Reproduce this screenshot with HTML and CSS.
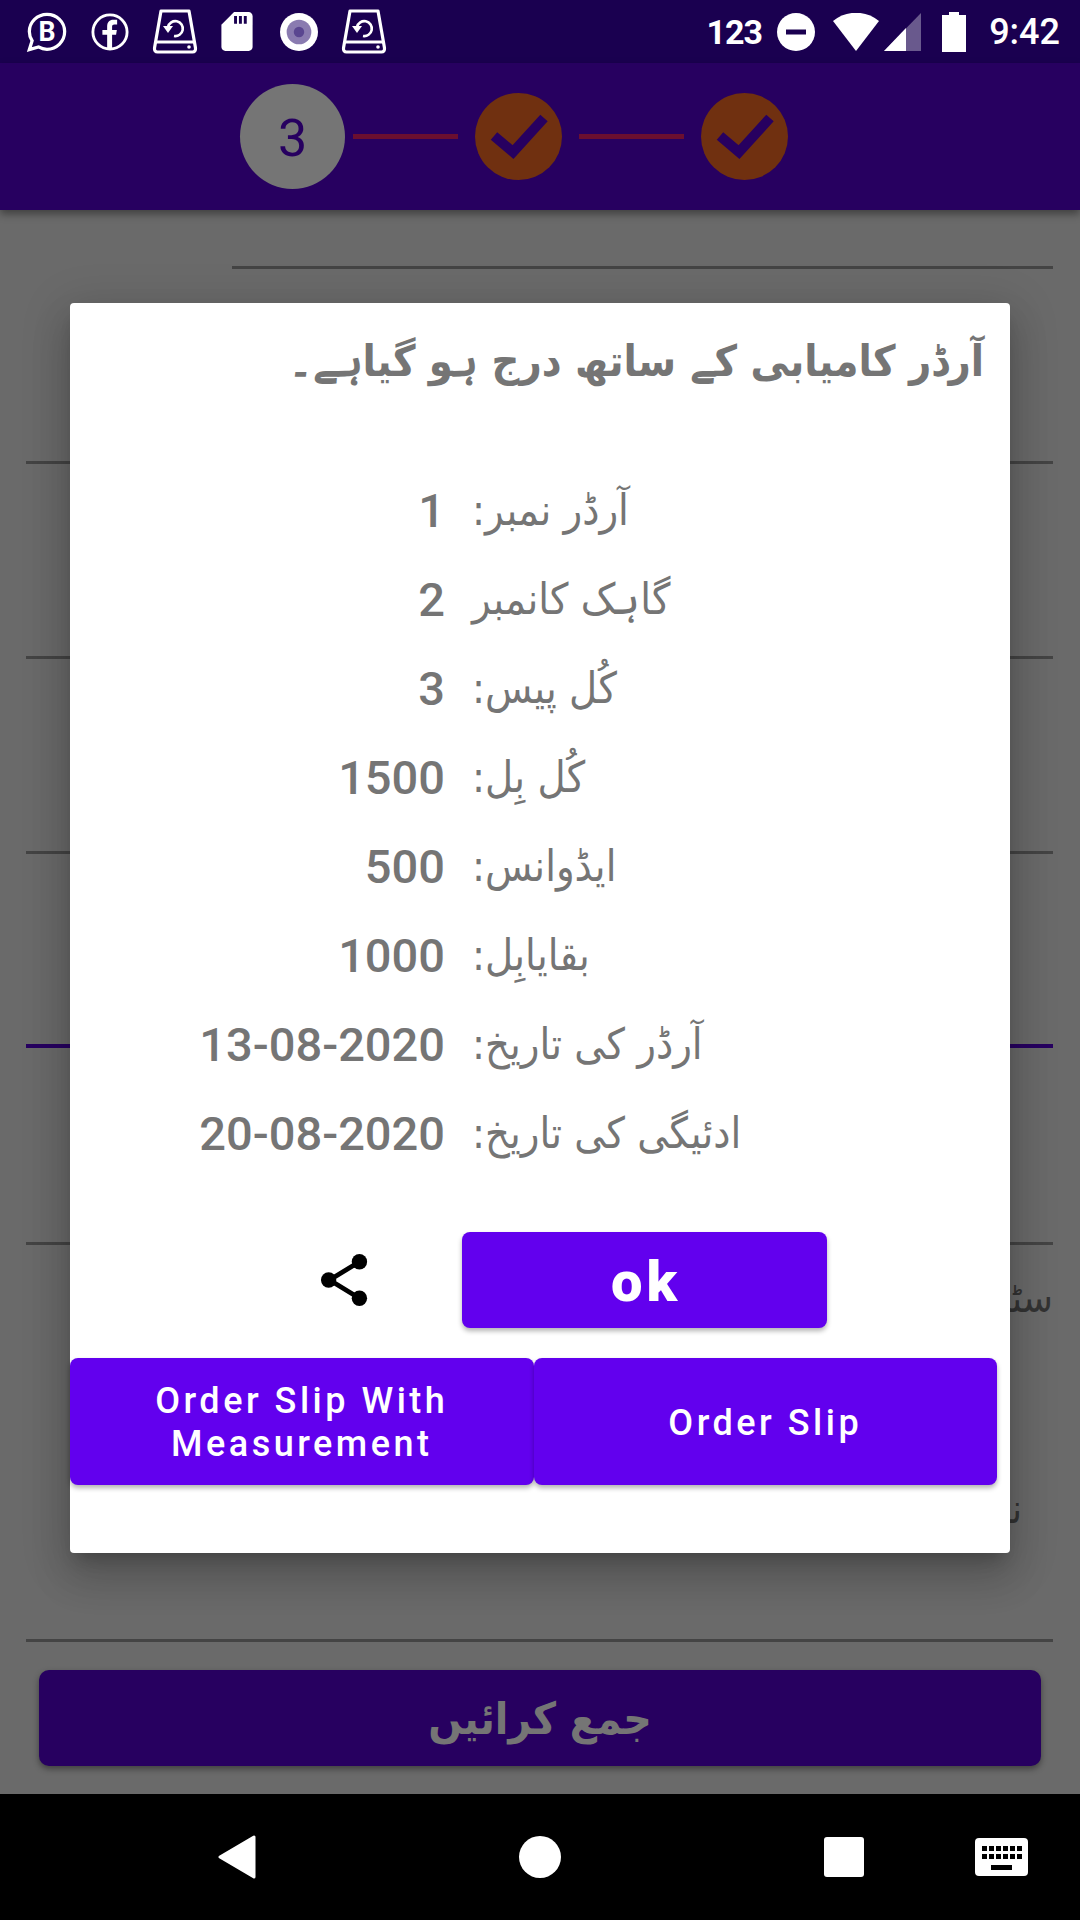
FILE: index.html
```html
<!DOCTYPE html>
<html lang="en">
<head>
  <meta charset="UTF-8" />
  <title>Order</title>
  <link rel="stylesheet" href="styles.css">
</head>
<body>

  <!-- Status bar -->
  <div class="status-bar">
    <div class="status-left">
      <svg width="42" height="44" viewBox="0 0 44 44"><path d="M22 3.500C11.800 3.500 3.500 11.600 3.500 21.600c0 3.600 1 6.800 2.900 9.600L3.500 40.500l9.600-2.900c2.700 1.600 5.700 2.500 8.900 2.500 10.200 0 18.500-8.300 18.500-18.500S32.200 3.500 22 3.500z" fill="none" stroke="#fff" stroke-width="3.400"/><text x="22" y="31" class="st-b">B</text></svg>
      <svg width="38" height="38" viewBox="0 0 40 40"><circle cx="20" cy="20" r="18" fill="none" stroke="#fff" stroke-width="3"/><path d="M17 38V23h-5v-5h5v-4c0-4.500 2.500-7 6.500-7h4v5h-3c-1.500 0-2.300.8-2.300 2.300V18h5l-.8 5h-4.200v15z" fill="#fff"/></svg>
      <svg width="46" height="46" viewBox="0 0 46 46"><use href="#backup-drive"/></svg>
      <svg width="32" height="39" viewBox="0 0 32 40"><path d="M13 0h15c2 0 4 2 4 4v32c0 2-2 4-4 4H4c-2 0-4-2-4-4V13z" fill="#fff"/><path d="M13 4h3v8h-3zM18 4h3v8h-3zM23 4h3v8h-3z" fill="#1a0050"/></svg>
      <svg class="st-dot" width="38" height="38" viewBox="0 0 40 40"><circle cx="20" cy="20" r="20" fill="#fff"/><circle cx="20" cy="20" r="13" fill="#8a7bb0"/><circle cx="20" cy="20" r="5.500" fill="#5a4690"/></svg>
      <svg width="46" height="46" viewBox="0 0 46 46"><use href="#backup-drive"/></svg>
    </div>
    <div class="status-right">
      <span class="st-123">123</span>
      <svg width="38" height="38" viewBox="0 0 38 38"><circle cx="19" cy="19" r="19" fill="#fff"/><rect x="9" y="16.500" width="20" height="5" fill="#1a0050"/></svg>
      <svg class="st-wifi" width="46" height="38" viewBox="0 0 46 38"><path d="M0 8C13-3 33-3 46 8L23 38z" fill="#fff"/></svg>
      <svg class="st-signal" width="37" height="38" viewBox="0 0 37 38"><path d="M37 0v38H0z" fill="#fff" opacity=".35"/><path d="M22 15v23H0z" fill="#fff"/></svg>
      <svg class="st-battery" width="24" height="40" viewBox="0 0 24 40"><path d="M7 0h10v3h7v37H0V3h7z" fill="#fff"/></svg>
      <span class="st-time">9:42</span>
    </div>
  </div>

  <svg class="defs" width="0" height="0">
    <symbol id="backup-drive" viewBox="0 0 46 46">
      <path d="M9 2h28l6.500 37c.3 2.500-1 4-3 4H5.500c-2 0-3.300-1.500-3-4z" fill="none" stroke="#fff" stroke-width="3.200" stroke-linejoin="round"/>
      <path d="M3 33h40" stroke="#fff" stroke-width="3.200"/>
      <circle cx="37" cy="38" r="1.800" fill="#fff"/>
      <path d="M16 18a7.500 7.500 0 1 1 6 9" fill="none" stroke="#fff" stroke-width="2.600"/>
      <path d="M11 17h10l-5 7z" fill="#fff"/>
    </symbol>
  </svg>

  <!-- Stepper -->
  <div class="app-bar">
    <div class="step step-active">3</div>
    <div class="step-line step-line-first"></div>
    <div class="step step-done">
      <svg viewBox="0 0 60 50"><path d="M5 24l19 16L55 6" fill="none" stroke="#270060" stroke-width="10"/></svg>
    </div>
    <div class="step-line"></div>
    <div class="step step-done">
      <svg viewBox="0 0 60 50"><path d="M5 24l19 16L55 6" fill="none" stroke="#270060" stroke-width="10"/></svg>
    </div>
  </div>

  <!-- Form behind the dialog -->
  <div class="content">
    <div class="field field-first"></div>
    <div class="field"></div>
    <div class="field"></div>
    <div class="field"></div>
    <div class="field field-focus"></div>
    <div class="field field-plain"></div>
    <div class="field field-note">
      <span dir="rtl">سٹچنگ</span>
      <span class="note-second" dir="rtl">نوٹ</span>
    </div>
    <button class="submit">جمع کرائیں</button>

    <!-- Dialog -->
    <div class="dialog">
      <div class="dialog-title" dir="rtl">آرڈر کامیابی کے ساتھ درج ہو گیاہے۔</div>
      <div class="rows">
        <div class="row"><span class="val">1</span><span class="lbl" dir="rtl">آرڈر نمبر:</span></div>
        <div class="row"><span class="val">2</span><span class="lbl" dir="rtl">گاہک کانمبر</span></div>
        <div class="row"><span class="val">3</span><span class="lbl" dir="rtl">کُل پیس:</span></div>
        <div class="row"><span class="val">1500</span><span class="lbl" dir="rtl">کُل بِل:</span></div>
        <div class="row"><span class="val">500</span><span class="lbl" dir="rtl">ایڈوانس:</span></div>
        <div class="row"><span class="val">1000</span><span class="lbl" dir="rtl">بقایابِل:</span></div>
        <div class="row"><span class="val">13-08-2020</span><span class="lbl" dir="rtl">آرڈر کی تاریخ:</span></div>
        <div class="row"><span class="val">20-08-2020</span><span class="lbl" dir="rtl">ادئیگی کی تاریخ:</span></div>
      </div>
      <div class="actions">
        <svg class="share" width="50" height="54" viewBox="0 0 52 56"><path d="M41 9L10 28l31 19" fill="none" stroke="#000" stroke-width="5"/><circle cx="41" cy="9" r="8" fill="#000"/><circle cx="9" cy="28" r="8" fill="#000"/><circle cx="41" cy="47" r="8" fill="#000"/></svg>
        <button class="btn btn-ok">ok</button>
      </div>
      <div class="slip-buttons">
        <button class="btn btn-slip">Order Slip With Measurement</button>
        <button class="btn btn-slip">Order Slip</button>
      </div>
    </div>
  </div>

  <!-- Navigation bar -->
  <div class="nav-bar">
    <svg class="nav-back" width="40" height="44" viewBox="0 0 40 44"><path d="M37 2v40L3 22z" fill="#fff" stroke="#fff" stroke-width="3" stroke-linejoin="round"/></svg>
    <div class="nav-home"></div>
    <div class="nav-recent"></div>
    <svg class="nav-keyboard" width="53" height="38" viewBox="0 0 53 38"><rect width="53" height="38" rx="4" fill="#fff"/><path d="M7 8h5v5H7zM14 8h5v5h-5zM21 8h5v5h-5zM28 8h5v5h-5zM35 8h5v5h-5zM42 8h5v5h-5zM7 16h5v5H7zM14 16h5v5h-5zM21 16h5v5h-5zM28 16h5v5h-5zM35 16h5v5h-5zM42 16h5v5h-5zM16 27h21v5H16z" fill="#000"/></svg>
  </div>

</body>
</html>
```

FILE: styles.css
```css
/* Basic Reset */
* {
  margin: 0;
  padding: 0;
  box-sizing: border-box;
}

body {
  width: 1080px;
  height: 1920px;
  display: flex;
  flex-direction: column;
  overflow: hidden;
  background: #6a6a6a;
  font-family: Roboto, "DejaVu Sans", sans-serif;
}

.defs {
  position: absolute;
}

/* Status bar */
.status-bar {
  height: 63px;
  flex: none;
  display: flex;
  justify-content: space-between;
  align-items: center;
  padding: 0 20px 0 26px;
  background: #1a0050;
  color: #fff;
}

.status-left {
  display: flex;
  align-items: center;
  gap: 23px;
}

.status-right {
  display: flex;
  align-items: center;
  gap: 15px;
}

.st-b {
  font: bold 28px Roboto, sans-serif;
  fill: #fff;
  text-anchor: middle;
}

.st-dot {
  margin-left: 4px;
}

.st-123 {
  font-size: 34px;
  font-weight: 700;
  letter-spacing: -1px;
}

.st-time {
  font-size: 36px;
  font-weight: 500;
  margin-left: 8px;
}

.st-wifi {
  margin-left: 3px;
}

.st-signal {
  margin-left: -10px;
}

.st-battery {
  margin-left: 6px;
}

/* Stepper */
.app-bar {
  height: 147px;
  flex: none;
  display: flex;
  align-items: center;
  padding: 0 0 0 240px;
  gap: 17px;
  background: #270060;
  position: relative;
  box-shadow: 0 4px 8px rgba(0, 0, 0, 0.4);
}

.step {
  border-radius: 50%;
  display: flex;
  align-items: center;
  justify-content: center;
  flex: none;
}

.step-active {
  width: 105px;
  height: 105px;
  padding-top: 3px;
  background: #757575;
  color: #270060;
  font-size: 52px;
}

.step-done {
  width: 87px;
  height: 87px;
  background: #703010;
}

.step-done svg {
  width: 62px;
  height: 50px;
}

.step-line {
  width: 105px;
  height: 5px;
  background: #6b0f30;
  flex: none;
}

.step-line-first {
  margin-left: -9px;
}

/* Form behind the dialog */
.content {
  flex: 1;
  position: relative;
  display: flex;
  flex-direction: column;
  padding: 0 27px 0 26px;
}

.field {
  height: 195px;
  flex: none;
  border-bottom: 3px solid #444;
  display: flex;
  flex-direction: column;
  align-items: flex-end;
  color: #333;
  font-size: 40px;
  font-family: "DejaVu Sans Condensed", "DejaVu Sans", sans-serif;
}

.field-first {
  height: 59px;
  margin-left: 206px;
}

.field-focus {
  height: 194px;
  border-bottom: 4px solid #270060;
}

.field-plain {
  height: 197px;
}

.field-note {
  height: 397px;
  padding-top: 30px;
  gap: 165px;
}

.note-second {
  margin-right: 31px;
}

.submit {
  height: 96px;
  margin: 28px 12px 0 13px;
  border: none;
  border-radius: 10px;
  background: #270060;
  color: #757575;
  font: bold 44px "DejaVu Sans Condensed", "DejaVu Sans", sans-serif;
  box-shadow: 0 3px 6px rgba(0, 0, 0, 0.4);
}

/* Dialog */
.dialog {
  position: absolute;
  top: 93px;
  left: 70px;
  width: 940px;
  height: 1250px;
  padding-top: 33px;
  background: #fff;
  border-radius: 4px;
  box-shadow: 0 24px 38px 3px rgba(0, 0, 0, 0.14), 0 9px 46px 8px rgba(0, 0, 0, 0.12), 0 11px 15px -7px rgba(0, 0, 0, 0.2);
}

.dialog-title {
  height: 62px;
  padding-right: 26px;
  color: #757575;
  font: bold 43px "DejaVu Sans Condensed", "DejaVu Sans", sans-serif;
}

.rows {
  margin-top: 82px;
  display: flex;
  flex-direction: column;
  gap: 29px;
}

.row {
  height: 60px;
  display: flex;
  align-items: center;
  gap: 27px;
}

.val {
  width: 375px;
  text-align: right;
  color: #757575;
  font-size: 47px;
  font-weight: 500;
}

.lbl {
  color: #757575;
  font-size: 43px;
  font-family: "DejaVu Sans Condensed", "DejaVu Sans", sans-serif;
}

.actions {
  margin-top: 69px;
  display: flex;
  align-items: center;
}

.share {
  margin-left: 250px;
  margin-right: 92px;
}

.btn {
  border: none;
  border-radius: 8px;
  padding-top: 3px;
  background: #6200ee;
  color: #fff;
  font-family: Roboto, sans-serif;
  font-weight: 500;
  box-shadow: 0 3px 5px rgba(0, 0, 0, 0.3);
}

.btn-ok {
  width: 365px;
  height: 96px;
  padding-left: 3px;
  font-size: 56px;
  font-weight: 900;
  letter-spacing: 4px;
}

.slip-buttons {
  margin-top: 30px;
  display: flex;
}

.btn-slip {
  width: 463.500px;
  height: 127px;
  padding: 3px 60px 0;
  font-size: 36px;
  line-height: 43px;
  letter-spacing: 3.500px;
}

/* Navigation bar */
.nav-bar {
  height: 126px;
  flex: none;
  position: relative;
  display: flex;
  align-items: center;
  background: #000;
  padding-left: 217px;
}

.nav-home {
  width: 42px;
  height: 42px;
  border-radius: 50%;
  background: #fff;
  margin-left: 262px;
}

.nav-recent {
  width: 40px;
  height: 40px;
  border-radius: 3px;
  background: #fff;
  margin-left: 263px;
}

.nav-keyboard {
  margin-left: 111px;
}
```
